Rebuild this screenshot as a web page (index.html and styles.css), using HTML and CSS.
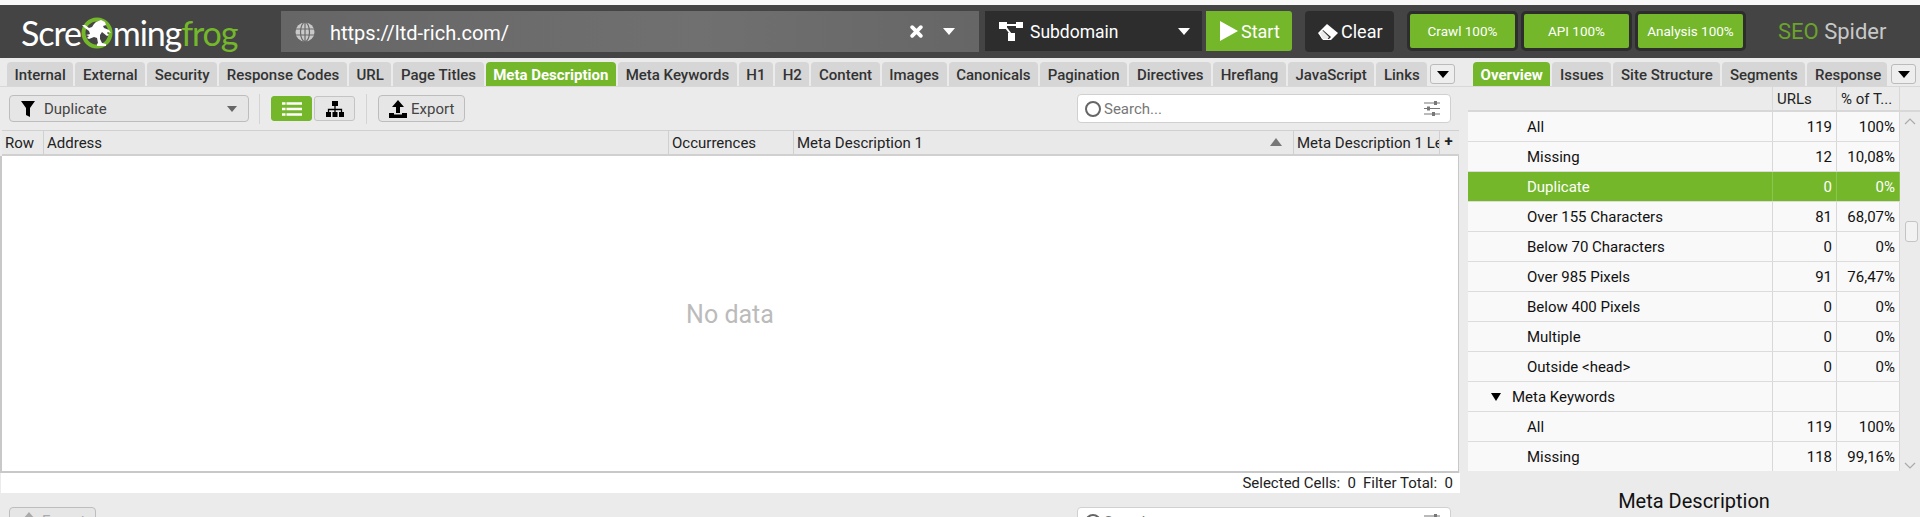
FILE: index.html
```html
<!DOCTYPE html>
<html lang="en">
<head>
<meta charset="utf-8">
<title>Screaming Frog SEO Spider</title>
<link rel="stylesheet" href="styles.css">
</head>
<body>
<div class="strip"></div>
<header class="top">
  <div class="logo">
    <span class="lw">Scre</span>
    <svg class="frog" viewBox="0 0 32 32" width="32" height="32"><circle cx="16" cy="16" r="13.500" fill="#444" stroke="#74b72b" stroke-width="4"/><path d="M15 5l5-2 4 2 1 3-3 1 1 2 5 2 2 3-3-1-1 1 2 2-2 1-5-4-2 3 0 4 2 4 4 1 0 2-9 0 0-2 1-1-1-5-3-1-5 2-2-1 2-2-3-1 4-1-1-3-4-3-3-3 3 0 4 3 3-1 2-3z" fill="#fff"/></svg>
    <span class="lw">ming</span><span class="lg">frog</span>
  </div>
  <div class="url">
    <svg class="globe" viewBox="0 0 20 20" width="20" height="20"><circle cx="10" cy="10" r="9.5" fill="#c9c9c9"/><path d="M0 7h20M0 13h20M10 0v20" stroke="#6a6a6a" stroke-width="1.2"/><ellipse cx="10" cy="10" rx="4.5" ry="9.5" fill="none" stroke="#6a6a6a" stroke-width="1.2"/></svg>
    <span class="urltext">https://ltd-rich.com/</span>
    <svg class="x" viewBox="0 0 12 12" width="13" height="13"><path d="M2 2l8 8M10 2l-8 8" stroke="#fff" stroke-width="3.4" stroke-linecap="round"/></svg>
    <i class="caret w"></i>
  </div>
  <div class="mode">
    <svg viewBox="0 0 24 20" width="24" height="20"><path d="M3 4h18M5 4l9 12" stroke="#fff" stroke-width="2"/><rect x="0" y="1" width="8" height="7" fill="#fff"/><rect x="17" y="1" width="7" height="6" fill="#fff"/><rect x="9" y="12" width="7" height="8" fill="#fff"/></svg>
    <span class="modetext">Subdomain</span>
    <i class="caret w"></i>
  </div>
  <div class="start"><svg viewBox="0 0 18 20" width="18" height="20"><path d="M0 0l18 10L0 20z" fill="#fff"/></svg><span>Start</span></div>
  <div class="clear"><svg viewBox="0 0 20 16" width="20" height="16"><path d="M0 9l9-9 11 9-7 7H5z" fill="#fff"/><path d="M5 6l8 7-2 2H5L2 9z" fill="#2d2d2d"/><path d="M4 15l-3-6 3-3 7 7-2 3z" fill="#fff" opacity=".9"/></svg><span>Clear</span></div>
  <div class="pills">
    <div class="pill">Crawl 100%</div>
    <div class="pill">API 100%</div>
    <div class="pill">Analysis 100%</div>
  </div>
  <div class="brand"><span class="sg">SEO</span> <span class="sw">Spider</span></div>
</header>
<main class="panes">
  <section class="left">
    <nav class="tabs ltabs">
      <span class="tab">Internal</span><span class="tab">External</span><span class="tab">Security</span><span class="tab">Response Codes</span><span class="tab">URL</span><span class="tab">Page Titles</span><span class="tab on">Meta Description</span><span class="tab">Meta Keywords</span><span class="tab">H1</span><span class="tab">H2</span><span class="tab">Content</span><span class="tab">Images</span><span class="tab">Canonicals</span><span class="tab">Pagination</span><span class="tab">Directives</span><span class="tab">Hreflang</span><span class="tab">JavaScript</span><span class="tab">Links</span>
      <span class="more"><i class="caret k"></i></span>
    </nav>
    <div class="toolbar">
      <div class="filter">
        <svg viewBox="0 0 14 16" width="14" height="16"><path d="M0 0h14L9 7v9l-4-2V7z" fill="#000"/></svg>
        <span class="ftext">Duplicate</span>
        <i class="caret g"></i>
      </div>
      <span class="sep"></span>
      <div class="seg on"><svg viewBox="0 0 20 14" width="20" height="14"><path d="M0 1.5h20M0 7h20M0 12.500h20" stroke="#fff" stroke-width="2.400"/><path d="M4 0v14" stroke="#74b72b" stroke-width="1"/></svg></div>
      <div class="seg"><svg viewBox="0 0 18 16" width="18" height="16"><path d="M6 0h6v5H6zM0 11h5v5H0zM6.500 11h5v5h-5zM13 11h5v5h-5z" fill="#000"/><path d="M9 5v4M2.500 11V8.500h13V11M9 8v3" stroke="#000" stroke-width="1.300" fill="none"/></svg></div>
      <span class="sep sep2"></span>
      <div class="btn"><svg viewBox="0 0 18 18" width="18" height="18"><path d="M9 0l6 7h-4v6H7V7H3z" fill="#000"/><path d="M0 13h5v1.500h8V13h5v5H0z" fill="#000"/></svg><span>Export</span></div>
      <div class="search">
        <i class="ring"></i><span class="sph">Search...</span>
        <svg class="sliders" viewBox="0 0 16 15" width="16" height="15"><path d="M0 2h16M0 7.500h16M0 13h16" stroke="#777" stroke-width="1.200"/><path d="M10 0h3v4h-3zM3 5.500h3v4H3zM8 11h3v4H8z" fill="#777"/></svg>
      </div>
    </div>
    <div class="thead">
      <span class="th c-row">Row</span><span class="th c-addr">Address</span><span class="th c-occ">Occurrences</span><span class="th c-md">Meta Description 1<i class="sort"></i></span><span class="th c-len">Meta Description 1 Le</span><span class="th c-plus">+</span>
    </div>
    <div class="tbody">No data</div>
    <div class="status"><span>Selected Cells:&nbsp; 0</span><span>Filter Total:&nbsp; 0</span></div>
    <div class="toolbar lower">
      <div class="btn off"><svg viewBox="0 0 18 18" width="18" height="18"><path d="M9 0l6 7h-4v6H7V7H3z" fill="#aaa"/></svg><span>Export</span></div>
      <div class="search">
        <i class="ring"></i><span class="sph">Search...</span>
        <svg class="sliders" viewBox="0 0 16 15" width="16" height="15"><path d="M0 2h16M0 7.500h16M0 13h16" stroke="#777" stroke-width="1.200"/><path d="M10 0h3v4h-3zM3 5.500h3v4H3zM8 11h3v4H8z" fill="#777"/></svg>
      </div>
    </div>
  </section>
  <aside class="right">
    <nav class="tabs rtabs">
      <span class="tab on">Overview</span><span class="tab">Issues</span><span class="tab">Site Structure</span><span class="tab">Segments</span><span class="tab clip">Response</span>
      <span class="more"><i class="caret k"></i></span>
    </nav>
    <div class="ohead"><span class="oname"></span><span class="onum">URLs</span><span class="opct">% of T...</span></div>
    <div class="obody">
      <div class="rows">
        <div class="row"><span class="oname">All</span><span class="onum">119</span><span class="opct">100%</span></div>
        <div class="row"><span class="oname">Missing</span><span class="onum">12</span><span class="opct">10,08%</span></div>
        <div class="row sel"><span class="oname">Duplicate</span><span class="onum">0</span><span class="opct">0%</span></div>
        <div class="row"><span class="oname">Over 155 Characters</span><span class="onum">81</span><span class="opct">68,07%</span></div>
        <div class="row"><span class="oname">Below 70 Characters</span><span class="onum">0</span><span class="opct">0%</span></div>
        <div class="row"><span class="oname">Over 985 Pixels</span><span class="onum">91</span><span class="opct">76,47%</span></div>
        <div class="row"><span class="oname">Below 400 Pixels</span><span class="onum">0</span><span class="opct">0%</span></div>
        <div class="row"><span class="oname">Multiple</span><span class="onum">0</span><span class="opct">0%</span></div>
        <div class="row"><span class="oname">Outside &lt;head&gt;</span><span class="onum">0</span><span class="opct">0%</span></div>
        <div class="row"><span class="oname grp"><i class="tri"></i>Meta Keywords</span><span class="onum"></span><span class="opct"></span></div>
        <div class="row"><span class="oname">All</span><span class="onum">119</span><span class="opct">100%</span></div>
        <div class="row"><span class="oname">Missing</span><span class="onum">118</span><span class="opct">99,16%</span></div>
      </div>
      <div class="sbar">
        <svg class="arrow" viewBox="0 0 12 7" width="12" height="7"><path d="M1 6l5-5 5 5" fill="none" stroke="#aaa" stroke-width="1.200"/></svg>
        <i class="thumb"></i>
        <svg class="arrow" viewBox="0 0 12 7" width="12" height="7"><path d="M1 1l5 5 5-5" fill="none" stroke="#aaa" stroke-width="1.200"/></svg>
      </div>
    </div>
    <h2 class="dtitle">Meta Description</h2>
  </aside>
</main>
</body>
</html>
```
FILE: styles.css
```css
* { box-sizing: border-box; }
html, body { margin: 0; height: 517px; overflow: hidden; }
body { background: #ebebeb; font-family: Roboto, "Liberation Sans", sans-serif; font-size: 15px; color: #222; }
i { display: block; }
.strip { height: 5px; background: #f8f8f8; }
.top { height: 53px; background: #444; display: flex; align-items: flex-start; padding-top: 6px; color: #fff; }
.logo { width: 281px; height: 46px; padding-left: 21px; padding-bottom: 3px; display: flex; align-items: center; font-family: Lato, sans-serif; font-weight: 400; font-size: 34px; letter-spacing: -1.1px; }
.lw { color: #fff; }
.lg { color: #74b72b; }
.frog { flex: none; }
.url { width: 698px; height: 41px; margin-right: 6px; background: linear-gradient(90deg, #666, #707070 60%, #666); display: flex; align-items: center; padding: 0 24px 0 14px; }
.urltext { flex: 1; margin-left: 15px; padding-top: 2px; font-size: 20px; color: #fff; }
.x { margin-right: 20px; }
.caret { width: 0; height: 0; border-left: 6px solid transparent; border-right: 6px solid transparent; border-top: 7px solid #fff; }
.caret.k { border-top-color: #000; }
.caret.g { border-top-color: #666; border-left-width: 5px; border-right-width: 5px; border-top-width: 6px; }
.mode { width: 217px; height: 40px; background: #2d2d2d; display: flex; align-items: center; padding: 0 12px 0 14px; margin-right: 4px; }
.modetext { flex: 1; margin-left: 7px; padding-top: 2px; font-size: 17.5px; }
.start { width: 86px; height: 40px; background: #74b72b; border-radius: 0 3px 3px 0; display: flex; align-items: center; padding-left: 14px; gap: 3px; font-size: 18px; margin-right: 13px; }
.clear { width: 89px; height: 41px; background: #2d2d2d; border-radius: 4px; display: flex; align-items: center; padding-left: 13px; gap: 3px; font-size: 18px; margin-right: 13px; }
.pills { display: flex; gap: 3px; }
.pill { width: 111px; height: 40px; background: #74b72b; border: 3px solid #2d2d2d; border-radius: 5px; display: flex; align-items: center; justify-content: center; font-size: 13.5px; }
.brand { margin-left: 32px; height: 40px; line-height: 41px; font-size: 22px; white-space: nowrap; }
.sg { color: #6ba32b; }
.sw { color: #c8c8c8; }

.panes { display: grid; grid-template-columns: 1460px 460px; }
.left { min-width: 0; }
.tabs { height: 25px; margin-top: 4px; display: flex; align-items: stretch; gap: 2px; border-bottom: 1px solid #d8d8d8; }
.ltabs { padding-left: 7px; }
.rtabs { padding-left: 13px; gap: 2px; position: relative; overflow: hidden; }
.tab { padding: 0 7.6px; height: 24px; line-height: 26px; background: #d6d6d6; border-radius: 4px 4px 0 0; font-weight: 500; font-size: 15px; color: #333; white-space: nowrap; }
.tab.on { background: #74b72b; color: #fff; font-weight: 700; }
.tab.clip { width: 80px; overflow: hidden; }
.more { width: 25px; height: 20px; margin: 2px 0 0 1px; background: #eee; border: 1px solid #bbb; border-radius: 3px; display: flex; align-items: center; justify-content: center; flex: none; }
.rtabs .more { position: absolute; left: 430px; top: 0; }
.toolbar { height: 43px; display: flex; align-items: center; padding: 0 9px; position: relative; }
.filter { width: 240px; height: 27px; border: 1px solid #bdbdbd; border-radius: 4px; background: #e6e6e6; display: flex; align-items: center; padding: 0 11px; }
.ftext { flex: 1; margin-left: 9px; color: #444; font-size: 15px; }
.sep { width: 1px; height: 30px; background: #d4d4d4; margin: 0 11px 0 10px; }
.sep2 { margin: 0 11px 0 9px; }
.seg { width: 41px; height: 25px; margin-right: 2px; border: 1px solid #c4c4c4; border-radius: 3px; background: #e6e6e6; display: flex; align-items: center; justify-content: center; }
.seg.on { background: #74b72b; border-color: #74b72b; }
.btn { width: 87px; height: 27px; border: 1px solid #bdbdbd; border-radius: 4px; background: #e6e6e6; display: flex; align-items: center; padding-left: 10px; gap: 4px; color: #444; }
.btn.off { color: #aaa; }
.search { position: absolute; left: 1077px; top: 7px; width: 374px; height: 29px; background: #fff; border: 1px solid #d0d0d0; border-radius: 4px; display: flex; align-items: center; padding: 0 10px 0 7px; }
.ring { width: 16px; height: 16px; border: 2px solid #666; border-radius: 50%; }
.sph { flex: 1; margin-left: 3px; color: #777; font-size: 15px; }
.thead { height: 26px; margin-left: 2px; margin-right: 1px; display: flex; background: #e9e9e9; border-top: 1px solid #d0d0d0; border-bottom: 2px solid #d0d0d0; }
.th { height: 100%; line-height: 25px; padding-left: 3px; border-right: 1px solid #d0d0d0; white-space: nowrap; overflow: hidden; flex: none; position: relative; }
.c-row { width: 42px; }
.c-addr { width: 625px; }
.c-occ { width: 125px; }
.c-md { width: 500px; }
.c-len { width: 146px; }
.c-plus { width: 17px; border-right: 0; font-weight: 700; text-align: center; padding: 0; line-height: 20px; }
.sort { position: absolute; right: 11px; top: 7px; width: 0; height: 0; border-left: 6px solid transparent; border-right: 6px solid transparent; border-bottom: 8px solid #777; }
.tbody { height: 317px; margin-right: 1px; background: #fff; border-left: 2px solid #c8c8c8; border-right: 1px solid #c8c8c8; border-bottom: 2px solid #c8c8c8; display: flex; align-items: center; justify-content: center; padding-top: 2px; font-size: 25px; color: #bbb; }
.status { height: 20px; background: #fff; margin-left: 1px; display: flex; justify-content: flex-end; gap: 7px; padding-right: 7px; line-height: 20px; color: #222; }
.lower { align-items: flex-start; padding-top: 14px; }
.lower .search { top: 14px; }

.right { min-width: 0; }
.ohead { height: 25px; margin-left: 8px; display: flex; border-bottom: 2px solid #d8d8d8; line-height: 25px; }
.oname { flex: 1; padding-left: 59px; white-space: nowrap; }
.onum { width: 64px; text-align: right; padding-right: 4px; border-left: 1px solid #d8d8d8; }
.opct { width: 64px; text-align: right; padding-right: 4px; border-left: 1px solid #d8d8d8; border-right: 1px solid #d8d8d8; }
.ohead .oname { flex: none; width: 304px; }
.ohead .onum { text-align: left; padding-left: 4px; }
.ohead .opct { text-align: left; padding-left: 4px; }
.obody { height: 359px; margin-left: 8px; display: flex; overflow: hidden; }
.rows { width: 432px; flex: none; }
.row { height: 30px; background: #f9f9f9; display: flex; border-bottom: 1px solid #dcdcdc; line-height: 30px; font-size: 15px; color: #111; }
.row .oname { width: 304px; flex: none; }
.row.sel { background: #74b72b; color: #fff; }
.row.sel .onum, .row.sel .opct { border-color: #8cc452; }
.grp { display: flex; align-items: center; padding-left: 23px !important; }
.tri { width: 0; height: 0; margin-right: 11px; border-left: 5px solid transparent; border-right: 5px solid transparent; border-top: 8px solid #000; }
.sbar { flex: 1; display: flex; flex-direction: column; align-items: center; padding: 6px 0 2px; position: relative; justify-content: space-between; }
.thumb { position: absolute; left: 5px; top: 109px; width: 13px; height: 21px; background: #f2f2f2; border: 1px solid #c4c4c4; border-radius: 3px; }
.dtitle { margin: 0; padding-left: 8px; text-align: center; font-size: 20px; font-weight: 400; line-height: 30px; margin-top: 15px; color: #111; }
```
